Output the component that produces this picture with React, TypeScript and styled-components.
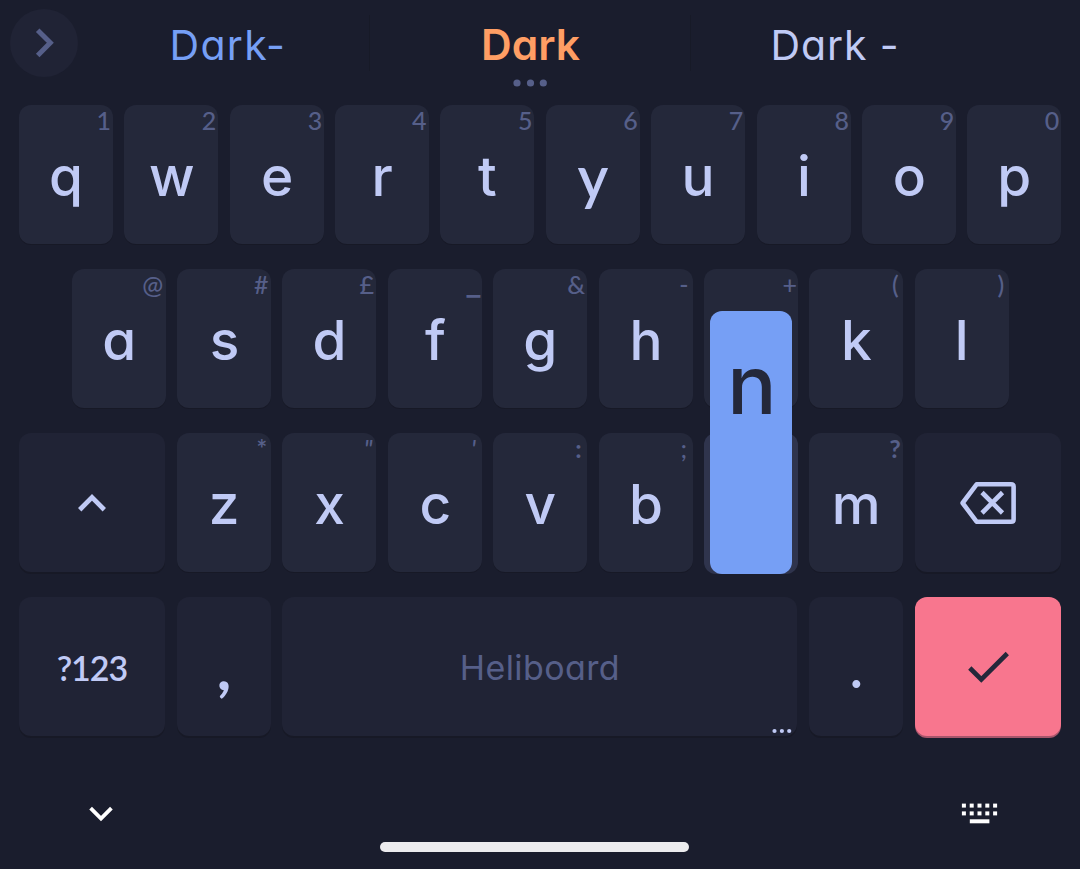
import React from "react";
import styled, { createGlobalStyle, css } from "styled-components";

const c = {
  bg: "#1a1d2d",
  key: "#24283a",
  fn: "#202335",
  pressed: "#2f344d",
  text: "#c0caf5",
  muted: "#565f89",
  blue: "#769ff5",
  orange: "#ff9e64",
  red: "#f8768e",
  shadow: "#171926",
};

const Global = createGlobalStyle`
  html, body { margin: 0; background: ${c.bg}; }
  * { box-sizing: border-box; }
`;

const Keyboard = styled.main`
  width: 1080px;
  height: 869px;
  overflow: hidden;
  display: flex;
  flex-direction: column;
  background: ${c.bg};
  color: ${c.text};
  font-family: Inter, "Liberation Sans", sans-serif;
  font-feature-settings: "cv11" 1;
`;

const Strip = styled.header`
  height: 105px;
  display: flex;
  align-items: flex-start;
  padding-left: 10px;
`;

const Expand = styled.button`
  width: 68px;
  height: 68px;
  margin: 9px 0 0;
  padding: 0;
  border: 0;
  border-radius: 50%;
  background: #202335;
  svg { display: block; }
`;

const Suggestions = styled.div`
  display: grid;
  grid-template-columns: 291px 1px 320px 1px 311px;
`;

const Divider = styled.i`
  height: 56px;
  margin-top: 15px;
  background: #171a27;
`;

const Suggestion = styled.div<{ $color: string; $shift: number; $strong?: boolean; $spacing: number }>`
  position: relative;
  height: 105px;
  padding-left: ${(p) => p.$shift}px;
  color: ${(p) => p.$color};
  font-size: ${(p) => (p.$strong ? 42.5 : 41)}px;
  font-weight: ${(p) => (p.$strong ? 620 : 420)};
  letter-spacing: ${(p) => p.$spacing}px;
  line-height: 90px;
  white-space: pre;
`;

const More = styled.svg`
  position: absolute;
  left: 142px;
  top: 78px;
`;

const Rows = styled.section`
  display: flex;
  flex-direction: column;
  gap: 25px;
`;

const Row = styled.div<{ $inset?: boolean }>`
  display: flex;
  gap: 11.37px;
  height: 139px;
  padding-left: ${(p) => (p.$inset ? 71.75 : 19)}px;
`;

type Kind = "letter" | "fn" | "pressed" | "enter";

const Key = styled.div<{ $kind?: Kind; $size?: "wide" | "space" }>`
  position: relative;
  flex: none;
  display: flex;
  justify-content: center;
  align-items: center;
  width: 94px;
  height: 139px;
  border-radius: 12px;
  background: ${c.key};
  box-shadow: 0 1px 0 ${c.shadow};
  ${(p) => p.$size === "wide" && css`width: 146px; &:first-child { margin-right: 0.75px; }`}
  ${(p) => p.$size === "space" && css`width: 515px; margin-right: 0.48px;`}
  ${(p) => p.$kind === "fn" && css`background: ${c.fn}; box-shadow: 0 2px 0 ${c.shadow};`}
  ${(p) => p.$kind === "pressed" && css`background: ${c.pressed}; box-shadow: 0 2px 0 ${c.pressed};`}
  ${(p) => p.$kind === "enter" && css`background: ${c.red}; box-shadow: 0 2px 0 #a7556b;`}
`;

const Glyph = styled.span<{ $dx?: number; $lato?: boolean }>`
  padding-top: 3px;
  margin-left: ${(p) => (p.$dx ?? 0) * 2}px;
  font-size: 55px;
  font-weight: 450;
  line-height: 139px;
  ${(p) => p.$lato && css`font-family: Lato, sans-serif; font-size: 59px; font-weight: 600;`}
`;

const CommaGlyph = styled(Glyph)`
  font-family: Lato, sans-serif;
  font-size: 62px;
  font-weight: 700;
  padding-top: 0;
`;

const Hint = styled.span<{ $right?: number; $slant?: boolean; $heavy?: boolean; $wide?: boolean }>`
  position: absolute;
  top: 0;
  right: ${(p) => p.$right ?? 2.5}px;
  color: ${c.muted};
  font-family: Lato, sans-serif;
  font-size: 25px;
  font-weight: ${(p) => (p.$heavy ? 700 : 500)};
  font-style: ${(p) => (p.$slant ? "italic" : "normal")};
  line-height: 31px;
  ${(p) => p.$wide && css`font-family: Inter, sans-serif; font-size: 30px; line-height: 30px;`}
`;

const ModeLabel = styled.span`
  font-family: Lato, sans-serif;
  font-size: 34px;
  font-weight: 600;
  letter-spacing: -1px;
  padding-top: 1px;
`;

const SpaceLabel = styled.span`
  color: ${c.muted};
  font-size: 34px;
  letter-spacing: 0.4px;
  padding-top: 2px;
`;

const SpaceDots = styled.svg`
  position: absolute;
  right: 5px;
  bottom: 2px;
`;

const Popup = styled.div`
  position: absolute;
  z-index: 2;
  left: 6px;
  top: -122px;
  width: 82px;
  height: 263px;
  padding-left: 2px;
  border-radius: 12px;
  background: ${c.blue};
  color: ${c.key};
  font-size: 82px;
  font-weight: 470;
  line-height: 147px;
  text-align: center;
`;

const NavBar = styled.footer`
  flex: 1;
  display: grid;
  grid-template-columns: 380px 309px 1fr;
`;

const Handle = styled.i`
  height: 10px;
  margin-top: 105.6px;
  border-radius: 5px;
  background: #ececee;
`;

const NavIcon = styled.svg<{ $x: number; $y: number }>`
  margin: ${(p) => p.$y}px 0 0 ${(p) => p.$x}px;
`;

type KeyDef = {
  k: string;
  h?: string;
  r?: number;
  dx?: number;
  lato?: boolean;
  slant?: boolean;
  heavy?: boolean;
  wide?: boolean;
};

const top: KeyDef[] = [
  { k: "q", h: "1", r: 2 }, { k: "w", h: "2", r: 2, dx: 0.5 }, { k: "e", h: "3", r: 1.5, dx: 0.5 }, { k: "r", h: "4" }, { k: "t", h: "5", r: 2 },
  { k: "y", h: "6", r: 2, lato: true }, { k: "u", h: "7", r: 2 }, { k: "i", h: "8", r: 1.5, dx: 0.5 }, { k: "o", h: "9", r: 1.5, dx: 0.5 }, { k: "p", h: "0", r: 2 },
];
const home: KeyDef[] = [
  { k: "a", h: "@", dx: 0.5 }, { k: "s", h: "#", dx: 0.5 }, { k: "d", h: "£" }, { k: "f", h: "_", r: 1.5, dx: 0.5, wide: true }, { k: "g", h: "&", r: 2 },
  { k: "h", h: "-", r: 4, dx: 0.5 }, { k: "", h: "+", r: 1 }, { k: "k", h: "(", r: 4.5 }, { k: "l", h: ")", r: 4.5 },
];
const bottom: KeyDef[] = [
  { k: "z", h: "*", r: 4, heavy: true }, { k: "x", h: "\"", r: 4, slant: true }, { k: "c", h: "'", r: 6, slant: true, dx: 0.5 },
  { k: "v", h: ":", r: 5.5, heavy: true }, { k: "b", h: ";", r: 5.5, dx: 0.5 },
];

const LetterKey = ({ k, h, r, dx, lato, slant, heavy, wide }: KeyDef) => (
  <Key>
    <Glyph $dx={dx} $lato={lato}>{k}</Glyph>
    {h && <Hint $right={r} $slant={slant} $heavy={heavy} $wide={wide}>{h}</Hint>}
  </Key>
);

export default function App() {
  return (
    <>
      <Global />
      <Keyboard>
        <Strip>
          <Expand aria-label="Expand toolbar">
            <svg width="68" height="68" fill="none" stroke={c.muted} strokeWidth="5">
              <path d="M27.7 21.2 L40.3 33.8 L27.7 46.4" />
            </svg>
          </Expand>
          <Suggestions>
            <Suggestion $color={c.blue} $shift={91.5} $spacing={1.3}>Dark-</Suggestion>
            <Divider />
            <Suggestion $color={c.orange} $shift={111} $spacing={0} $strong>
              Dark
              <More width="36" height="10" fill={c.muted}>
                <circle cx="5" cy="5" r="3.6" />
                <circle cx="18.5" cy="5" r="3.6" />
                <circle cx="31.3" cy="5" r="3.6" />
              </More>
            </Suggestion>
            <Divider />
            <Suggestion $color={c.text} $shift={79.5} $spacing={0.9}>Dark -</Suggestion>
          </Suggestions>
        </Strip>

        <Rows>
          <Row>{top.map((d) => <LetterKey key={d.h} {...d} />)}</Row>
          <Row $inset>{home.map((d) => <LetterKey key={d.h} {...d} />)}</Row>
          <Row>
            <Key $kind="fn" $size="wide">
              <svg width="36" height="24" fill="none" stroke={c.text} strokeWidth="4.8">
                <path d="M5.7 18.7 L18 6.4 L30.3 18.7" />
              </svg>
            </Key>
            {bottom.map((d) => <LetterKey key={d.h} {...d} />)}
            <Key $kind="pressed">
              <Popup>n</Popup>
            </Key>
            <LetterKey k="m" h="?" heavy />
            <Key $kind="fn" $size="wide">
              <svg width="58" height="44" fill="none" stroke={c.text} strokeWidth="4.6" strokeLinejoin="round">
                <path d="M17.6 3.3 H52 Q54.6 3.3 54.6 5.5 V38.5 Q54.6 40.7 52 40.7 H17.6 L3.6 22 Z" />
                <path d="M23 11.5 L43.5 32 M43.5 11.5 L23 32" />
              </svg>
            </Key>
          </Row>
          <Row>
            <Key $kind="fn" $size="wide"><ModeLabel>?123</ModeLabel></Key>
            <Key $kind="fn"><CommaGlyph>,</CommaGlyph></Key>
            <Key $kind="fn" $size="space">
              <SpaceLabel>Heliboard</SpaceLabel>
              <SpaceDots width="20" height="6" fill={c.text}>
                <circle cx="2.5" cy="3" r="2.1" />
                <circle cx="9.9" cy="3" r="2.1" />
                <circle cx="17.2" cy="3" r="2.1" />
              </SpaceDots>
            </Key>
            <Key $kind="fn"><Glyph>.</Glyph></Key>
            <Key $kind="enter" $size="wide">
              <svg width="44" height="36" fill="none" stroke={c.key} strokeWidth="4.6">
                <path d="M3.8 19 L15.3 30.5 L41.3 4.5" />
              </svg>
            </Key>
          </Row>
        </Rows>

        <NavBar>
          <NavIcon $x={86} $y={66} width="30" height="24" fill="none" stroke="#fff" strokeWidth="3.8">
            <path d="M4.6 6.2 L15 16.6 L25.4 6.2" />
          </NavIcon>
          <Handle />
          <NavIcon $x={272} $y={66} width="40" height="26" fill="#fff">
            {[1.6, 9.4].map((y) =>
              [0, 1, 2, 3, 4].map((i) => <rect key={`${y}-${i}`} x={0.9 + i * 7.8} y={y} width="4" height="4" />)
            )}
            <rect x="8.8" y="17.3" width="19.6" height="4" />
          </NavIcon>
        </NavBar>
      </Keyboard>
    </>
  );
}
